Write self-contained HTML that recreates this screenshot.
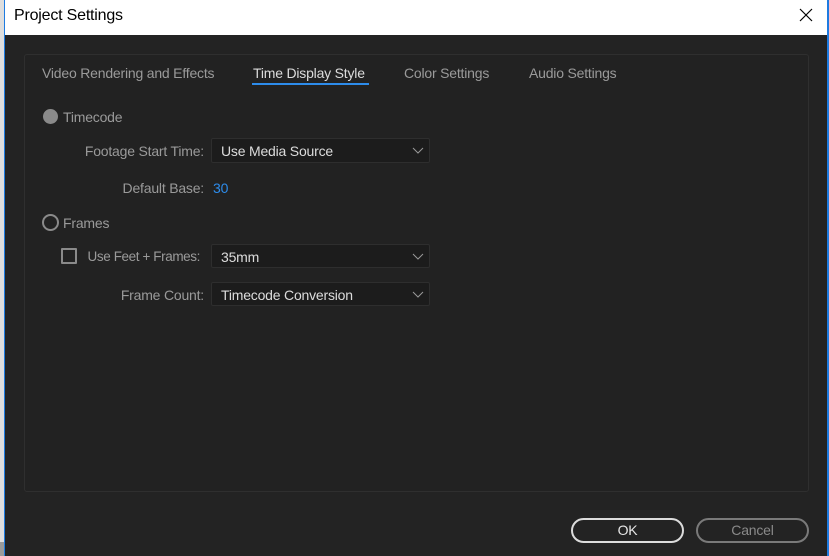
<!DOCTYPE html><html><head><style>
*{margin:0;padding:0;box-sizing:border-box}
body{width:829px;height:556px;overflow:hidden;background:#232323;font-family:"Liberation Sans",sans-serif;position:relative;letter-spacing:-0.2px}
.a{position:absolute}
.lbl{color:#9a9a9a;font-size:14px;text-align:right;width:200px}
.sel{position:absolute;left:211px;width:219px;height:24px;background:#1c1c1c;border:1px solid #2e2e2e;border-radius:2px;color:#dcdcdc;font-size:14px;padding:4px 0 0 9px}
.sel svg{position:absolute;right:5px;top:8px}
</style></head><body>
<div class="a" style="left:0;top:0;width:4px;height:556px;background:#dedede"></div>
<div class="a" style="left:0;top:542px;width:4px;height:14px;background:#9a9a9a"></div>
<div class="a" style="left:4px;top:0;width:1px;height:556px;background:#1e7be0"></div>
<div class="a" style="left:827px;top:0;width:2px;height:556px;background:#1e7be0"></div>
<div class="a" style="left:5px;top:0;width:822px;height:35px;background:#fff"></div>
<div class="a" style="left:14px;top:7px;font-size:16px;color:#000">Project Settings</div>
<svg class="a" style="left:799px;top:8px" width="14" height="14"><path d="M1 1L13 13M13 1L1 13" stroke="#000" stroke-width="1.2"/></svg>
<div class="a" style="left:24px;top:54px;width:785px;height:438px;border:1px solid #2f2f2f;border-radius:3px;background:#222"></div>
<div class="a" style="left:42px;top:65px;font-size:14px;color:#9a9a9a">Video Rendering and Effects</div>
<div class="a" style="left:253px;top:65px;font-size:14px;color:#dcdcdc">Time Display Style</div>
<div class="a" style="left:252px;top:83px;width:117px;height:2px;background:#2d8ceb"></div>
<div class="a" style="left:404px;top:65px;font-size:14px;color:#9a9a9a">Color Settings</div>
<div class="a" style="left:529px;top:65px;font-size:14px;color:#9a9a9a">Audio Settings</div>
<div class="a" style="left:43px;top:109px;width:15px;height:15px;border-radius:50%;background:#8a8a8a"></div>
<div class="a" style="left:63px;top:109px;font-size:14px;color:#9a9a9a">Timecode</div>
<div class="a lbl" style="left:4px;top:143px">Footage Start Time:</div>
<div class="sel" style="top:138px;height:25px">Use Media Source<svg width="12" height="8"><path d="M1 1L6 6L11 1" stroke="#999" fill="none"/></svg></div>
<div class="a lbl" style="left:4px;top:180px">Default Base:</div>
<div class="a" style="left:213px;top:180px;font-size:14px;color:#2d8ceb">30</div>
<div class="a" style="left:42px;top:214px;width:17px;height:17px;border-radius:50%;border:2px solid #8a8a8a"></div>
<div class="a" style="left:63px;top:215px;font-size:14px;color:#9a9a9a">Frames</div>
<div class="a" style="left:61px;top:248px;width:16px;height:16px;border:2px solid #8a8a8a;border-radius:1px"></div>
<div class="a lbl" style="left:0px;top:249px;font-size:13.5px;letter-spacing:-0.4px">Use Feet + Frames:</div>
<div class="sel" style="top:244px">35mm<svg width="12" height="8"><path d="M1 1L6 6L11 1" stroke="#999" fill="none"/></svg></div>
<div class="a lbl" style="left:4px;top:287px">Frame Count:</div>
<div class="sel" style="top:282px">Timecode Conversion<svg width="12" height="8"><path d="M1 1L6 6L11 1" stroke="#999" fill="none"/></svg></div>
<div class="a" style="left:571px;top:518px;width:113px;height:25px;border:2px solid #dcdcdc;border-radius:13px;color:#e6e6e6;font-size:14px;text-align:center;line-height:21px">OK</div>
<div class="a" style="left:696px;top:518px;width:113px;height:25px;border:2px solid #7a7a7a;border-radius:13px;color:#8a8a8a;font-size:14px;text-align:center;line-height:21px">Cancel</div>
</body></html>
